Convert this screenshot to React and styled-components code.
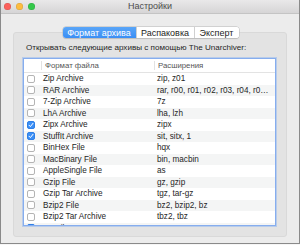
import React from "react";
import styled, { createGlobalStyle } from "styled-components";

const Global = createGlobalStyle`
  html, body { margin: 0; padding: 0; background: #f6f6f6; }
  body { font-family: "Liberation Sans", Arial, sans-serif; -webkit-font-smoothing: antialiased; }
  #root { width: 300px; height: 245px; overflow: hidden; }
`;

const Window = styled.div`
  box-sizing: border-box;
  width: 300px;
  height: 244px;
  background: #ececec;
  border: 1px solid #8a8a8a;
  border-top: none;
  display: flex;
  flex-direction: column;
`;

const TitleBar = styled.div`
  box-sizing: border-box;
  height: 14px;
  flex: none;
  background: linear-gradient(#e9e8e9, #d6d5d6);
  border-bottom: 1px solid #c4c4c4;
  display: grid;
  grid-template-columns: 1fr auto 1fr;
  align-items: center;
  padding: 0 3px;
`;

const Lights = styled.div`
  display: flex;
  gap: 5px;
  align-items: center;
`;

const Light = styled.span`
  width: 7px;
  height: 7px;
  border-radius: 50%;
  background: ${(p) => p.$c};
  box-shadow: inset 0 0 0 0.5px rgba(0, 0, 0, 0.15);
`;

const Title = styled.div`
  font-size: 9px;
  color: #4c4c4c;
  line-height: 13px;
`;

const Content = styled.div`
  flex: 1;
  display: flex;
  flex-direction: column;
  padding: 13px 12px 6px;
`;

const TabRow = styled.div`
  display: flex;
  justify-content: center;
  position: relative;
  z-index: 1;
  padding-left: 1px;
`;

const Segmented = styled.div`
  display: flex;
  height: 11px;
  border-radius: 3px;
  overflow: hidden;
  box-shadow: 0 0 0 0.5px #b9b9b9, 0 0.5px 1px rgba(0, 0, 0, 0.15);
  background: #fff;
`;

const Tab = styled.div`
  box-sizing: border-box;
  height: 11px;
  width: ${(p) => p.$w}px;
  display: flex;
  align-items: center;
  justify-content: center;
  font-size: 9px;
  color: ${(p) => (p.$active ? "#fff" : "#1d1d1d")};
  background: ${(p) => (p.$active ? "linear-gradient(#5aa6f8, #3a8ef5)" : "#fff")};
  border-left: ${(p) => (p.$first ? "none" : "1px solid #d0d0d0")};
`;

const Panel = styled.div`
  box-sizing: border-box;
  flex: 1;
  margin-top: -6px;
  background: #e3e3e3;
  border: 1px solid #d9d9d9;
  border-radius: 3px;
  padding: 9px 10px 10px 9px;
  display: flex;
  flex-direction: column;
`;

const Label = styled.div`
  font-size: 8.1px;
  line-height: 12px;
  color: #262626;
  padding-left: 3px;
  margin-bottom: 4px;
  white-space: nowrap;
`;

const Table = styled.div`
  box-sizing: border-box;
  height: 168px;
  background: #fff;
  border: 1px solid #86adee;
  box-shadow: 0 0 0 1px rgba(150, 185, 240, 0.55);
  overflow: hidden;
`;

const cols = "17px 113px 1fr";

const Header = styled.div`
  display: grid;
  grid-template-columns: ${cols};
  height: 14px;
  box-sizing: border-box;
  border-bottom: 1px solid #e3e3e3;
  align-items: stretch;
`;

const HeadCell = styled.div`
  font-size: 7.8px;
  color: #555;
  display: flex;
  align-items: center;
  padding-left: 3px;
  border-left: ${(p) => (p.$divider ? "1px solid #e2e2e2" : "none")};
  margin: 2px 0;
`;

const Row = styled.div`
  display: grid;
  grid-template-columns: ${cols};
  height: 11.5px;
  align-items: center;
  background: ${(p) => (p.$alt ? "#f4f5f5" : "#fff")};
`;

const CheckCell = styled.div`
  display: flex;
  align-items: center;
  padding-left: 3px;
`;

const Box = styled.div`
  box-sizing: border-box;
  width: 8px;
  height: 8px;
  border-radius: 2px;
  background: ${(p) => (p.$on ? "#3b8ff6" : "#fff")};
  border: 0.5px solid ${(p) => (p.$on ? "#2f7fe6" : "#b4b4b4")};
  display: flex;
  align-items: center;
  justify-content: center;
`;

const Cell = styled.div`
  font-size: 8.2px;
  color: #262626;
  padding-left: ${(p) => p.$pl}px;
  padding-right: 6px;
  white-space: nowrap;
  overflow: hidden;
  text-overflow: ellipsis;
  line-height: 11px;
`;

const rows = [
  ["Zip Archive", "zip, z01", false],
  ["RAR Archive", "rar, r00, r01, r02, r03, r04, r05, r06, r07", false],
  ["7-Zip Archive", "7z", false],
  ["LhA Archive", "lha, lzh", false],
  ["Zipx Archive", "zipx", true],
  ["StuffIt Archive", "sit, sitx, 1", true],
  ["BinHex File", "hqx", false],
  ["MacBinary File", "bin, macbin", false],
  ["AppleSingle File", "as", false],
  ["Gzip File", "gz, gzip", false],
  ["Gzip Tar Archive", "tgz, tar-gz", false],
  ["Bzip2 File", "bz2, bzip2, bz", false],
  ["Bzip2 Tar Archive", "tbz2, tbz", false],
  ["XZ File", "xz", true],
];

const Check = () => (
  <svg width="6" height="6" viewBox="0 0 6 6">
    <path d="M1 3.2 L2.4 4.6 L5 1.3" fill="none" stroke="#fff" strokeWidth="1" strokeLinecap="round" strokeLinejoin="round" />
  </svg>
);

export default function App() {
  return (
    <>
      <Global />
      <Window>
        <TitleBar>
          <Lights>
            <Light $c="#fc605c" />
            <Light $c="#fdbc40" />
            <Light $c="#34c84a" />
          </Lights>
          <Title>Настройки</Title>
          <div />
        </TitleBar>
        <Content>
          <TabRow>
            <Segmented>
              <Tab $active $first $w={73}>Формат архива</Tab>
              <Tab $w={58}>Распаковка</Tab>
              <Tab $w={45}>Эксперт</Tab>
            </Segmented>
          </TabRow>
          <Panel>
            <Label>Открывать следующие архивы с помощью The Unarchiver:</Label>
            <Table>
              <Header>
                <HeadCell />
                <HeadCell $divider>Формат файла</HeadCell>
                <HeadCell $divider>Расширения</HeadCell>
              </Header>
              {rows.map(([name, ext, on], i) => (
                <Row key={name} $alt={i % 2 === 1}>
                  <CheckCell>
                    <Box $on={on}>{on && <Check />}</Box>
                  </CheckCell>
                  <Cell $pl={2}>{name}</Cell>
                  <Cell $pl={3}>{ext}</Cell>
                </Row>
              ))}
            </Table>
          </Panel>
        </Content>
      </Window>
    </>
  );
}
